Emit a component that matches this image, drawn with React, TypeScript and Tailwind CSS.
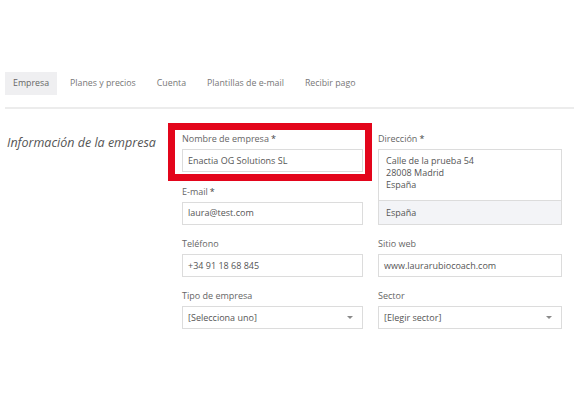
import React from 'react';

const tabs = ['Empresa', 'Planes y precios', 'Cuenta', 'Plantillas de e-mail', 'Recibir pago'];

const Label: React.FC<{ text: string; required?: boolean }> = ({ text, required }) => (
    <div className="h-[13px] mb-[4px] text-[9px] leading-[13px] text-[#666]">
        {text}
        {required && <span className="ml-[2px] text-[#444]">*</span>}
    </div>
);

const Input: React.FC<{ value: string }> = ({ value }) => (
    <div className="h-[23px] border border-[#dcdcdc] bg-white px-[5px] flex items-center text-[9px] text-[#555]">
        {value}
    </div>
);

const Select: React.FC<{ value: string }> = ({ value }) => (
    <div className="h-[23px] border border-[#dcdcdc] bg-white pl-[5px] pr-[9px] flex items-center justify-between text-[9px] text-[#555]">
        <span>{value}</span>
        <span className="w-0 h-0 border-l-[3px] border-r-[3px] border-t-[3px] border-l-transparent border-r-transparent border-t-[#8a8a8a]"></span>
    </div>
);

export default function App() {
    return (
        <div className="w-[574px] h-[420px] bg-white overflow-hidden pt-[72px]" style={{ fontFamily: '"Open Sans", "Noto Sans", sans-serif' }}>
            {/* tabs */}
            <div className="ml-[5px] flex gap-[5px] h-[23px]">
                {tabs.map((t, i) => (
                    <div
                        key={t}
                        className={`px-[8px] flex items-center text-[8.8px] ${i === 0 ? 'bg-[#efeff1] text-[#666]' : 'text-[#777]'}`}
                    >
                        {t}
                    </div>
                ))}
            </div>
            <div className="ml-[5px] mt-[12px] h-[2px] bg-[#ececec]"></div>

            <div className="flex mt-[23px]">
                <div className="w-[182px] pl-[7px] pt-[3px] text-[12.5px] italic leading-[16px] text-[#555]">
                    Información de la empresa
                </div>

                <div className="grid grid-cols-[181px_184px] gap-x-[15px] gap-y-[12px]">
                    <div className="relative">
                        <div className="absolute -left-[14px] -right-[9px] -top-[9px] -bottom-[8px] border-[7px] border-[#e3051b]"></div>
                        <Label text="Nombre de empresa" required />
                        <Input value="Enactia OG Solutions SL" />
                    </div>

                    <div className="row-span-2">
                        <Label text="Dirección" required />
                        <div className="border border-[#dcdcdc] h-[76px] flex flex-col text-[9px] text-[#555]">
                            <div className="flex-1 px-[7px] pt-[5px] leading-[12px] bg-white">
                                <div>Calle de la prueba 54</div>
                                <div>28008 Madrid</div>
                                <div>España</div>
                            </div>
                            <div className="h-[24px] border-t border-[#dcdcdc] bg-[#f3f4f7] px-[7px] flex items-center">
                                España
                            </div>
                        </div>
                    </div>

                    <div>
                        <Label text="E-mail" required />
                        <Input value="laura@test.com" />
                    </div>

                    <div>
                        <Label text="Teléfono" />
                        <Input value="+34 91 18 68 845" />
                    </div>
                    <div>
                        <Label text="Sitio web" />
                        <Input value="www.laurarubiocoach.com" />
                    </div>

                    <div>
                        <Label text="Tipo de empresa" />
                        <Select value="[Selecciona uno]" />
                    </div>
                    <div>
                        <Label text="Sector" />
                        <Select value="[Elegir sector]" />
                    </div>
                </div>
            </div>
        </div>
    );
}
